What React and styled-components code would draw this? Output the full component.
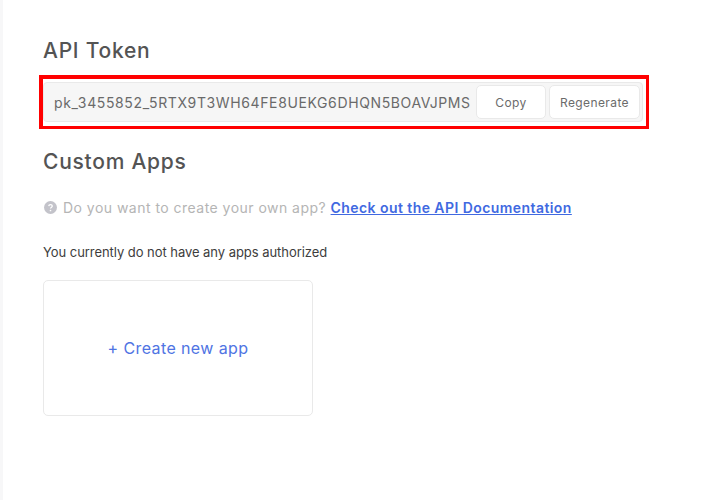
import React from 'react';
import styled, { createGlobalStyle } from 'styled-components';

const GlobalStyle = createGlobalStyle`
  html, body {
    margin: 0;
    height: 100%;
    background: #fff;
  }
  body {
    font-family: Inter, "Noto Sans", sans-serif;
  }
`

const Page = styled.div`
  box-sizing: border-box;
  width: 726px;
  height: 500px;
  overflow: hidden;
  border-left: 3px solid #f7f7f8;
  padding: 39px 0 0 40px;
`

const Heading = styled.h2`
  margin: 0;
  font-size: 21px;
  line-height: 24px;
  font-weight: 500;
  color: #545454;
  letter-spacing: 0.75px;
`

const Highlight = styled.div`
  box-sizing: border-box;
  width: 610px;
  height: 54px;
  margin: 12px 0 0 -4px;
  border: 3px solid #f00;
  border-width: 4px 3px 3px 4px;
  padding: 3px 0 0 0;
  display: flex;
`

const TokenBar = styled.div`
  box-sizing: border-box;
  width: 600px;
  height: 40px;
  display: flex;
  align-items: center;
  gap: 3px;
  padding: 0 2px 0 10px;
  background: #f6f6f6;
  border: 1px solid #e9e9e9;
  border-radius: 4px;
`

const Token = styled.span`
  flex: 1;
  white-space: nowrap;
  font-size: 14px;
  color: #6a6a6a;
  letter-spacing: 0.62px;
`

const TokenButton = styled.button`
  box-sizing: border-box;
  width: ${p => p.$width}px;
  height: 34px;
  padding: 0;
  background: #fff;
  border: 1px solid #e9e9e9;
  border-radius: 5px;
  font-family: inherit;
  font-size: 12px;
  color: #6b6b6b;
  letter-spacing: 0.4px;
`

const SecondHeading = styled(Heading)`
  margin-top: 21px;
`

const Hint = styled.div`
  display: flex;
  align-items: center;
  gap: 6px;
  margin-top: 23px;
  margin-left: 1px;
  height: 20px;
  font-size: 14px;
  color: #b5b5b5;
  letter-spacing: 0.47px;
`

const DocLink = styled.a`
  color: #4169e1;
  font-weight: 600;
  letter-spacing: 0.43px;
  text-decoration: underline;
`

const Status = styled.p`
  margin: 25px 0 0;
  font-size: 13px;
  line-height: 20px;
  color: #3d3d3d;
  letter-spacing: -0.05px;
`

const CreateCard = styled.div`
  box-sizing: border-box;
  width: 270px;
  height: 136px;
  margin-top: 18px;
  display: flex;
  align-items: center;
  justify-content: center;
  background: #fff;
  border: 1px solid #e9e9e9;
  border-radius: 5px;
  font-size: 16px;
  color: #4f74e3;
  letter-spacing: 0.4px;
`

function HelpIcon() {
  return (
    <svg width="13" height="13" viewBox="0 0 14 14">
      <circle cx="7" cy="7" r="7" fill="#c3c3ca" />
      <path d="M5.1 5.5C5.2 4.4 6 3.8 7 3.8c1.1 0 1.9.7 1.9 1.6 0 .8-.5 1.2-1.1 1.6-.5.3-.8.6-.8 1.2" fill="none" stroke="#fff" strokeWidth="1.4" />
      <circle cx="7" cy="10.2" r=".9" fill="#fff" />
    </svg>
  )
}

export default function App() {
  return (
    <Page>
      <GlobalStyle />
      <Heading>API Token</Heading>
      <Highlight>
        <TokenBar>
          <Token>pk_3455852_5RTX9T3WH64FE8UEKG6DHQN5BOAVJPMS</Token>
          <TokenButton $width={70}>Copy</TokenButton>
          <TokenButton $width={91}>Regenerate</TokenButton>
        </TokenBar>
      </Highlight>
      <SecondHeading>Custom Apps</SecondHeading>
      <Hint>
        <HelpIcon />
        <span>Do you want to create your own app? <DocLink href="#">Check out the API Documentation</DocLink></span>
      </Hint>
      <Status>You currently do not have any apps authorized</Status>
      <CreateCard>+ Create new app</CreateCard>
    </Page>
  )
}
